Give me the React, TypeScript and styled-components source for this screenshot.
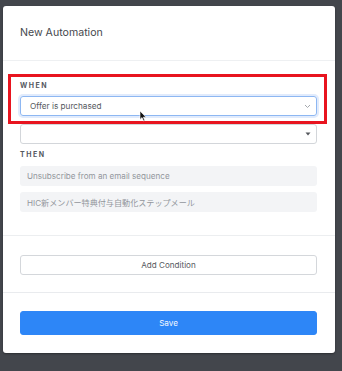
import React from 'react';
import styled, { createGlobalStyle } from 'styled-components';

const Global = createGlobalStyle`
  html, body {
    margin: 0;
    padding: 0;
    background: #43464c;
    font-family: Inter, "Noto Sans CJK JP", "Noto Sans", sans-serif;
  }
`;

const Page = styled.div`
  width: 342px;
  height: 371px;
  overflow: hidden;
  padding: 6px 7px 0 3px;
  box-sizing: border-box;
`;

const Modal = styled.div`
  width: 332px;
  height: 347px;
  background: #fff;
  border-radius: 3px;
  box-shadow: 0 1px 2px rgba(0, 0, 0, 0.35);
  display: flex;
  flex-direction: column;
  position: relative;
`;

const Header = styled.div`
  height: 55px;
  flex-shrink: 0;
  display: flex;
  align-items: center;
  padding-left: 17px;
  padding-bottom: 2px;
  box-sizing: border-box;
  border-bottom: 1px solid #eef0f2;
  font-size: 10.6px;
  color: #45484d;
`;

const Body = styled.div`
  padding: 15px 18px 0 17px;
  height: 175px;
  flex-shrink: 0;
  box-sizing: border-box;
  border-bottom: 1px solid #eceef0;
  position: relative;
`;

const Label = styled.div<{ $h: number }>`
  font-size: 7px;
  font-weight: 700;
  letter-spacing: 1.5px;
  color: #55595f;
  height: ${p => p.$h}px;
  line-height: ${p => p.$h}px;
`;

const Select = styled.div<{ $focus?: boolean }>`
  height: 20px;
  box-sizing: border-box;
  border: 1px solid ${p => (p.$focus ? '#8db7f2' : '#d3d6da')};
  box-shadow: ${p => (p.$focus ? '0 0 0 2px rgba(120, 165, 240, 0.22)' : 'none')};
  border-radius: 3px;
  display: flex;
  align-items: center;
  justify-content: space-between;
  padding: 0 5px 0 9px;
  font-size: 8.2px;
  color: #55585d;
  margin-top: ${p => (p.$focus ? 0 : 8)}px;
`;

const Field = styled.div<{ $first?: boolean }>`
  height: 20px;
  margin-top: ${p => (p.$first ? 0 : 6)}px;
  background: #f3f4f6;
  border-radius: 3px;
  display: flex;
  align-items: center;
  padding-left: 7px;
  font-size: 8.1px;
  color: #92969c;
`;

const Highlight = styled.div`
  position: absolute;
  left: 5px;
  top: 13px;
  width: 319px;
  height: 50px;
  box-sizing: border-box;
  border: 3px solid #e8141f;
  pointer-events: none;
`;

const Cursor = styled.svg`
  position: absolute;
  left: 136px;
  top: 49px;
`;

const Footer = styled.div<{ $pad: string; $border?: boolean }>`
  padding: ${p => p.$pad};
  border-bottom: ${p => (p.$border ? '1px solid #e9ebee' : 'none')};
`;

const Button = styled.div<{ $primary?: boolean }>`
  height: ${p => (p.$primary ? 24 : 20)}px;
  box-sizing: border-box;
  border-radius: 3px;
  border: 1px solid ${p => (p.$primary ? '#2f86f6' : '#d4d7db')};
  background: ${p => (p.$primary ? '#2d86f7' : '#fff')};
  color: ${p => (p.$primary ? '#f4f8ff' : '#56595e')};
  font-size: 8.1px;
  display: flex;
  align-items: center;
  justify-content: center;
`;

const App: React.FC = () => {
  return (
    <Page>
      <Global />
      <Modal>
        <Header>New Automation</Header>
        <Body>
          <Label $h={20}>WHEN</Label>
          <Select $focus>
            <span>Offer is purchased</span>
            <svg width="7" height="5" viewBox="0 0 7 5">
              <path d="M1 1 L3.5 3.5 L6 1" stroke="#9a9ea4" strokeWidth="0.9" fill="none" />
            </svg>
          </Select>
          <Select>
            <span />
            <svg width="6" height="4" viewBox="0 0 6 4">
              <path d="M0.5 0.5 L5.5 0.5 L3 3.5 Z" fill="#55585d" />
            </svg>
          </Select>
          <Label $h={22}>THEN</Label>
          <Field $first>Unsubscribe from an email sequence</Field>
          <Field>HIC新メンバー特典付与自動化ステップメール</Field>
          <Highlight />
          <Cursor width="8" height="12" viewBox="0 0 8 12">
            <path d="M1 1 L1 9.5 L3 7.6 L4.6 11 L5.8 10.4 L4.3 7.2 L7 7.2 Z" fill="#111" stroke="#fff" strokeWidth="0.6" />
          </Cursor>
        </Body>
        <Footer $pad="19px 18px 17px 17px" $border>
          <Button>Add Condition</Button>
        </Footer>
        <Footer $pad="18px 18px 0 17px">
          <Button $primary>Save</Button>
        </Footer>
      </Modal>
    </Page>
  );
};

export default App;
